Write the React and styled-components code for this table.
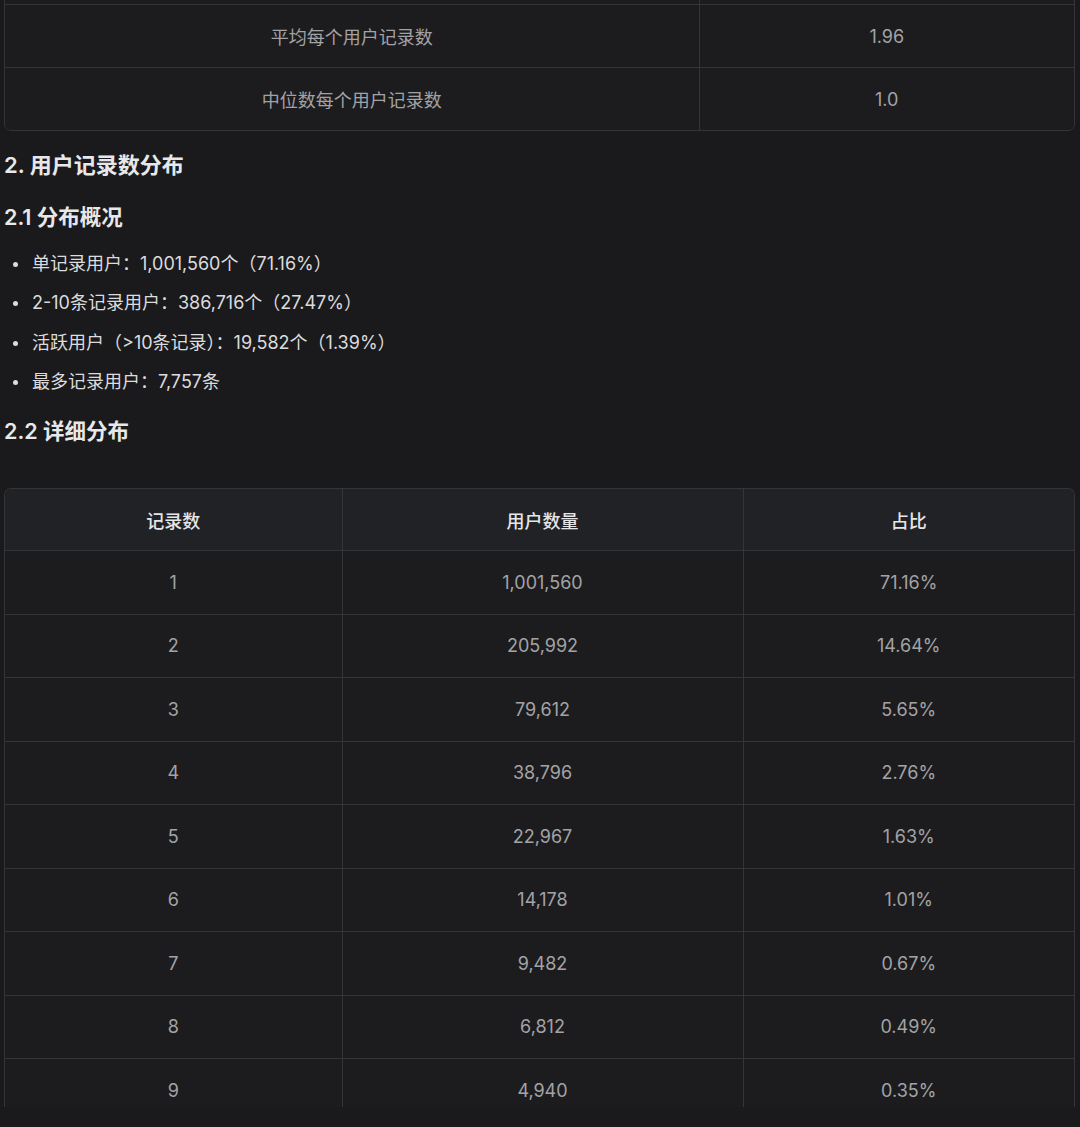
import React from "react";
import styled, { createGlobalStyle } from "styled-components";

const Global = createGlobalStyle`
  html, body { margin: 0; padding: 0; background: #1a1a1c; }
  body { font-family: "Inter", "Noto Sans CJK SC", sans-serif; color: #e4e4e6; overflow: hidden; }
`;

const Page = styled.div`
  width: 1080px;
  height: 1127px;
  overflow: hidden;
  box-sizing: border-box;
  padding: 0 5px 0 4px;
`;

const Shift = styled.div`
  margin-top: -59px;
`;

const TableWrap = styled.div`
  border: 1px solid #333538;
  border-radius: 7px;
  overflow: hidden;
  ${(p) => p.$clip && `max-height: ${p.$clip}px; border-bottom: none; border-bottom-left-radius: 0; border-bottom-right-radius: 0;`}
`;

const Table = styled.table`
  width: 100%;
  border-collapse: collapse;
  table-layout: fixed;
`;

const Th = styled.th`
  height: 61px;
  background: #212225;
  color: #e6e6e8;
  font-size: 18px;
  font-weight: 500;
  text-align: center;
  border-right: 1px solid #333538;
  border-bottom: 1px solid #333538;
  padding: 0;
  &:last-child { border-right: none; }
`;

const Td = styled.td`
  height: ${(p) => p.$h || 62}px;
  background: #1c1c1e;
  color: #a3a3a6;
  font-size: 18px;
  text-align: center;
  border-right: 1px solid #333538;
  border-bottom: 1px solid #333538;
  padding: 0;
  &:last-child { border-right: none; }
  tr:last-child & { border-bottom: none; }
`;

const H2 = styled.h2`
  margin: 20px 0 0;
  font-size: 22px;
  font-weight: 600;
  line-height: 28px;
  color: #e8e8ea;
`;

const H3 = styled.h3`
  margin: ${(p) => p.$mt}px 0 0;
  font-size: 21.5px;
  font-weight: 600;
  line-height: 28px;
  color: #e8e8ea;
`;

const List = styled.ul`
  margin: 17px 0 0;
  padding: 0 0 0 28px;
  list-style: none;
`;

const Item = styled.li`
  position: relative;
  font-size: 18px;
  line-height: 24px;
  height: 39.3px;
  padding-top: 4px;
  box-sizing: border-box;
  color: #dcdcde;
  &::before {
    content: "";
    position: absolute;
    left: -19px;
    top: 14px;
    width: 5px;
    height: 5px;
    border-radius: 50%;
    background: #dcdcde;
  }
`;

const Gap = styled.div`
  height: 43px;
`;

const dist = [
  ["1", "1,001,560", "71.16%"],
  ["2", "205,992", "14.64%"],
  ["3", "79,612", "5.65%"],
  ["4", "38,796", "2.76%"],
  ["5", "22,967", "1.63%"],
  ["6", "14,178", "1.01%"],
  ["7", "9,482", "0.67%"],
  ["8", "6,812", "0.49%"],
  ["9", "4,940", "0.35%"],
];

export default function App() {
  return (
    <>
      <Global />
      <Page>
        <Shift>
          <TableWrap>
            <Table>
              <colgroup>
                <col style={{ width: "694px" }} />
                <col />
              </colgroup>
              <tbody>
                <tr><Td /><Td /></tr>
                <tr><Td>平均每个用户记录数</Td><Td>1.96</Td></tr>
                <tr><Td>中位数每个用户记录数</Td><Td>1.0</Td></tr>
              </tbody>
            </Table>
          </TableWrap>
        </Shift>
        <H2>2. 用户记录数分布</H2>
        <H3 $mt={24}>2.1 分布概况</H3>
        <List>
          <Item>单记录用户：1,001,560个（71.16%）</Item>
          <Item>2-10条记录用户：386,716个（27.47%）</Item>
          <Item>活跃用户（&gt;10条记录）：19,582个（1.39%）</Item>
          <Item>最多记录用户：7,757条</Item>
        </List>
        <H3 $mt={12}>2.2 详细分布</H3>
        <Gap />
        <TableWrap $clip={618}>
          <Table>
            <colgroup>
              <col style={{ width: "337px" }} />
              <col style={{ width: "401px" }} />
              <col />
            </colgroup>
            <thead>
              <tr><Th>记录数</Th><Th>用户数量</Th><Th>占比</Th></tr>
            </thead>
            <tbody>
              {dist.map((r) => (
                <tr key={r[0]}>
                  <Td $h={62.5}>{r[0]}</Td>
                  <Td $h={62.5}>{r[1]}</Td>
                  <Td $h={62.5}>{r[2]}</Td>
                </tr>
              ))}
            </tbody>
          </Table>
        </TableWrap>
      </Page>
    </>
  );
}
